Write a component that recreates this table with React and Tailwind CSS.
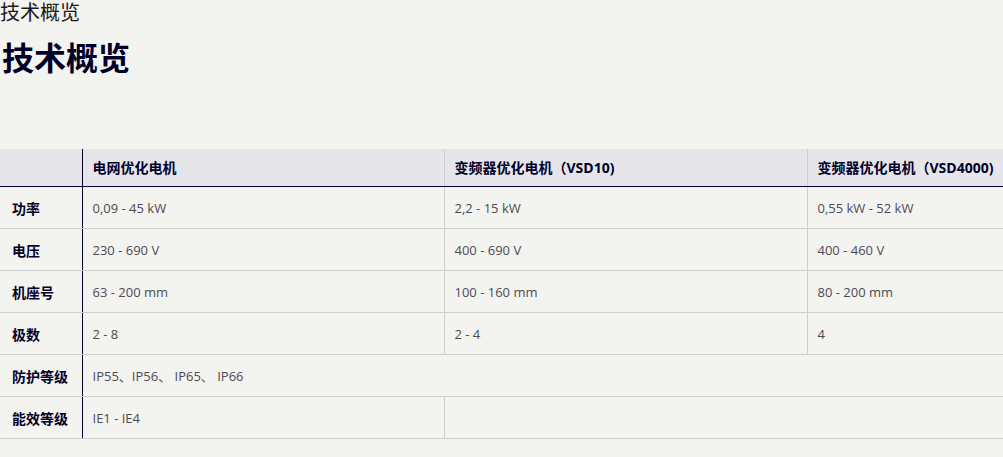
import React from 'react';

const ROWS = [
  { label: '功率', cells: ['0,09 - 45 kW', '2,2 - 15 kW', '0,55 kW - 52 kW'] },
  { label: '电压', cells: ['230 - 690 V', '400 - 690 V', '400 - 460 V'] },
  { label: '机座号', cells: ['63 - 200 mm', '100 - 160 mm', '80 - 200 mm'] },
  { label: '极数', cells: ['2 - 8', '2 - 4', '4'] },
];

const font = { fontFamily: '"Open Sans", "Noto Sans CJK SC", sans-serif' };

export default function App() {
  const labelCls = 'h-[42px] pl-3 pr-2 pt-[3px] text-[14px] font-bold text-[#000028] border-r border-r-[#000028] border-b border-b-[#cdcdcd] text-left';
  const cellCls = 'h-[42px] px-[10px] pt-[3px] text-[13px] text-[#4b4b55] border-b border-[#cdcdcd] align-middle';
  const headCls = 'h-[37px] px-[10px] text-left text-[14px] font-bold text-[#000028] border-b border-b-[#000028] whitespace-nowrap';

  return (
    <div className="min-h-[457px] w-[1003px] bg-[#f3f3f0] text-[#000028]" style={font}>
      <div className="text-[20px] leading-[26px] text-[#1a1a1a]">技术概览</div>
      <h1 className="mt-[8px] pl-[2px] text-[32px] leading-[48px] font-bold text-[#000028]">技术概览</h1>

      <table className="mt-[67px] w-[1003px] table-fixed border-collapse">
        <colgroup>
          <col className="w-[82px]" />
          <col className="w-[362px]" />
          <col className="w-[363px]" />
          <col className="w-[196px]" />
        </colgroup>
        <thead>
          <tr className="bg-[#e5e5ea]">
            <th className="h-[37px] border-r border-r-[#000028] border-b border-b-[#000028]" />
            <th className={`${headCls} border-r border-r-[#cdcdcd]`}>电网优化电机</th>
            <th className={`${headCls} border-r border-r-[#cdcdcd]`}>变频器优化电机（VSD10)</th>
            <th className={headCls}>变频器优化电机（VSD4000)</th>
          </tr>
        </thead>
        <tbody>
          {ROWS.map((row) => (
            <tr key={row.label}>
              <th className={labelCls}>{row.label}</th>
              <td className={`${cellCls} border-r`}>{row.cells[0]}</td>
              <td className={`${cellCls} border-r`}>{row.cells[1]}</td>
              <td className={cellCls}>{row.cells[2]}</td>
            </tr>
          ))}
          <tr>
            <th className={labelCls}>防护等级</th>
            <td colSpan={3} className={cellCls}>IP55、IP56、 IP65、 IP66</td>
          </tr>
          <tr>
            <th className={labelCls}>能效等级</th>
            <td className={`${cellCls} border-r`}>IE1 - IE4</td>
            <td colSpan={2} className={cellCls}></td>
          </tr>
        </tbody>
      </table>
    </div>
  );
}
